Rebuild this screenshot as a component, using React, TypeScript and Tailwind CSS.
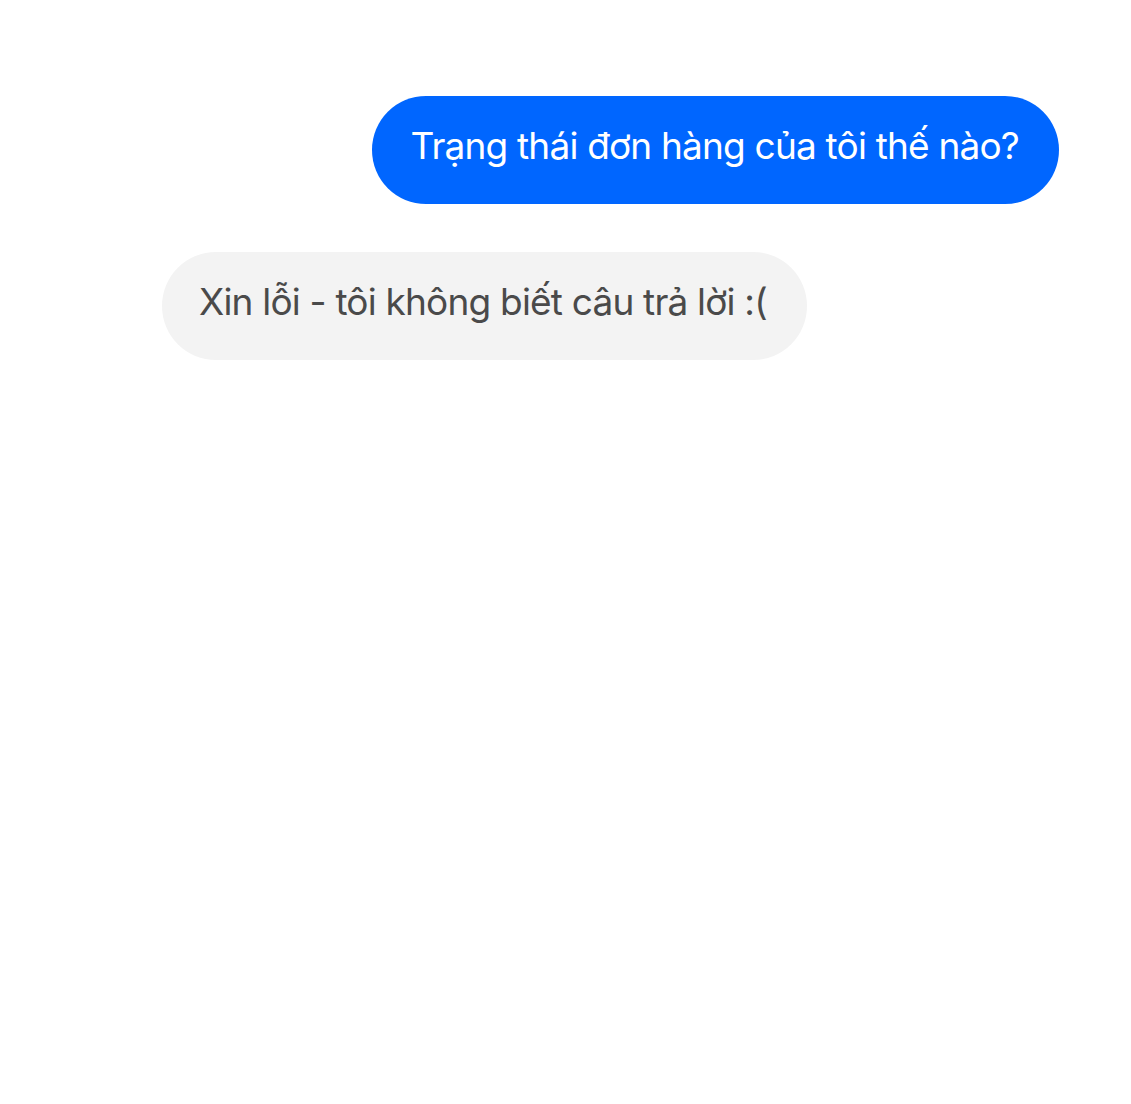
export default function App() {
  return (
    <div className="min-h-[1104px] w-full bg-white font-['Inter',sans-serif]">
      <div className="flex flex-col gap-12 pt-[96px] pr-[72px] pl-[162px]">
        {/* user message */}
        <div className="self-end rounded-[54px] bg-[#0066ff] pl-[38px] pr-[40px] pt-[26px] pb-[34px] text-[37px] leading-[48px] tracking-[-0.8px] text-white">
          Trạng thái đơn hàng của tôi thế nào?
        </div>

        {/* bot reply */}
        <div className="self-start rounded-[54px] bg-[#f3f3f3] pl-[37px] pr-[40px] pt-[26px] pb-[34px] text-[37px] leading-[48px] tracking-[-0.8px] text-[#4a4a4a]">
          Xin lỗi - tôi không biết câu trả lời :(
        </div>
      </div>
    </div>
  );
}
